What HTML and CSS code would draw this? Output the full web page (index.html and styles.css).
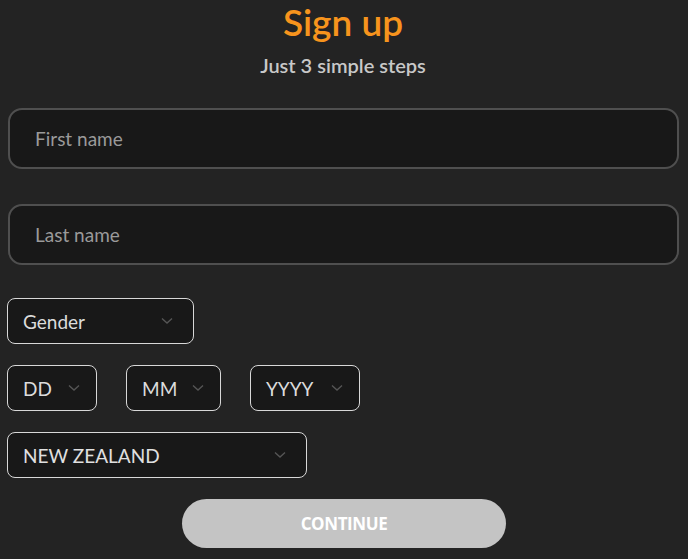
FILE: index.html
```html
<!DOCTYPE html>
<html lang="en">
<head>
<meta charset="utf-8">
<title>Sign up</title>
<link rel="stylesheet" href="styles.css">
</head>
<body>
<div class="page">
  <header class="head">
    <h1 class="title">Sign up</h1>
    <p class="subtitle">Just 3 simple steps</p>
  </header>
  <form class="form">
    <div class="field"><input class="text-input" type="text" placeholder="First name"></div>
    <div class="field"><input class="text-input" type="text" placeholder="Last name"></div>
    <div class="row">
      <div class="select select-gender"><span class="select-label">Gender</span><svg class="chev" width="12" height="8" viewBox="0 0 12 8"><path d="M1 1.5 L6 6 L11 1.5" fill="none" stroke="#555" stroke-width="1.4"/></svg></div>
    </div>
    <div class="row row-date">
      <div class="select select-dd"><span class="select-label">DD</span><svg class="chev" width="12" height="8" viewBox="0 0 12 8"><path d="M1 1.5 L6 6 L11 1.5" fill="none" stroke="#555" stroke-width="1.4"/></svg></div>
      <div class="select select-mm"><span class="select-label">MM</span><svg class="chev" width="12" height="8" viewBox="0 0 12 8"><path d="M1 1.5 L6 6 L11 1.5" fill="none" stroke="#555" stroke-width="1.4"/></svg></div>
      <div class="select select-yy"><span class="select-label">YYYY</span><svg class="chev" width="12" height="8" viewBox="0 0 12 8"><path d="M1 1.5 L6 6 L11 1.5" fill="none" stroke="#555" stroke-width="1.4"/></svg></div>
    </div>
    <div class="row">
      <div class="select select-country"><span class="select-label">NEW ZEALAND</span><svg class="chev" width="12" height="8" viewBox="0 0 12 8"><path d="M1 1.5 L6 6 L11 1.5" fill="none" stroke="#555" stroke-width="1.4"/></svg></div>
    </div>
    <div class="actions">
      <button type="button" class="btn">CONTINUE</button>
    </div>
  </form>
</div>
</body>
</html>
```

FILE: styles.css
```css
html, body {
  margin: 0;
  padding: 0;
  background: #232323;
}
body {
  font-family: Lato, "Open Sans", sans-serif;
  width: 688px;
  height: 559px;
  overflow: hidden;
}
.page {
  padding: 0 9px 0 7px;
}
.head {
  text-align: center;
}
.title {
  margin: 0;
  padding-top: 2px;
  font-size: 37px;
  line-height: 40px;
  font-weight: 600;
  color: #f7941d;
}
.subtitle {
  margin: 10px 0 0;
  font-size: 20px;
  line-height: 26px;
  font-weight: 600;
  color: #c8c8c8;
}
.form {
  display: flex;
  flex-direction: column;
  margin-top: 30px;
}
.field {
  padding-left: 1px;
  margin-bottom: 35px;
}
.field + .field {
  margin-bottom: 33px;
}
.text-input {
  box-sizing: border-box;
  display: block;
  width: 100%;
  height: 61px;
  border: 2px solid #4f4f4f;
  border-radius: 14px;
  background: #181818;
  padding: 0 0 0 25px;
  font-family: inherit;
  font-size: 19px;
  color: #ddd;
  outline: none;
}
.text-input::placeholder {
  color: #9a9a9a;
}
.row {
  display: flex;
  gap: 29px;
  margin-bottom: 21px;
}
.select {
  box-sizing: border-box;
  height: 46px;
  border: 1px solid #d8d8d8;
  border-radius: 8px;
  background: #181818;
  display: flex;
  align-items: center;
  justify-content: space-between;
  padding: 0 20px 0 15px;
}
.select-label {
  font-size: 19px;
  color: #dcdcdc;
}
.chev {
  display: block;
}
.select-gender { width: 187px; }
.select-dd { width: 90px; padding-right: 16px; }
.select-mm { width: 95px; padding-right: 16px; }
.select-yy { width: 110px; padding-right: 16px; }
.select-country { width: 300px; }
.select-country .select-label { color: #e0e0e0; }
.actions {
  display: flex;
  justify-content: center;
  padding-left: 2px;
}
.btn {
  width: 324px;
  height: 49px;
  border: none;
  border-radius: 25px;
  background: #c4c4c4;
  color: #fff;
  font-family: "Open Sans", sans-serif;
  font-weight: 700;
  font-size: 17px;
  letter-spacing: -0.4px;
}
```
